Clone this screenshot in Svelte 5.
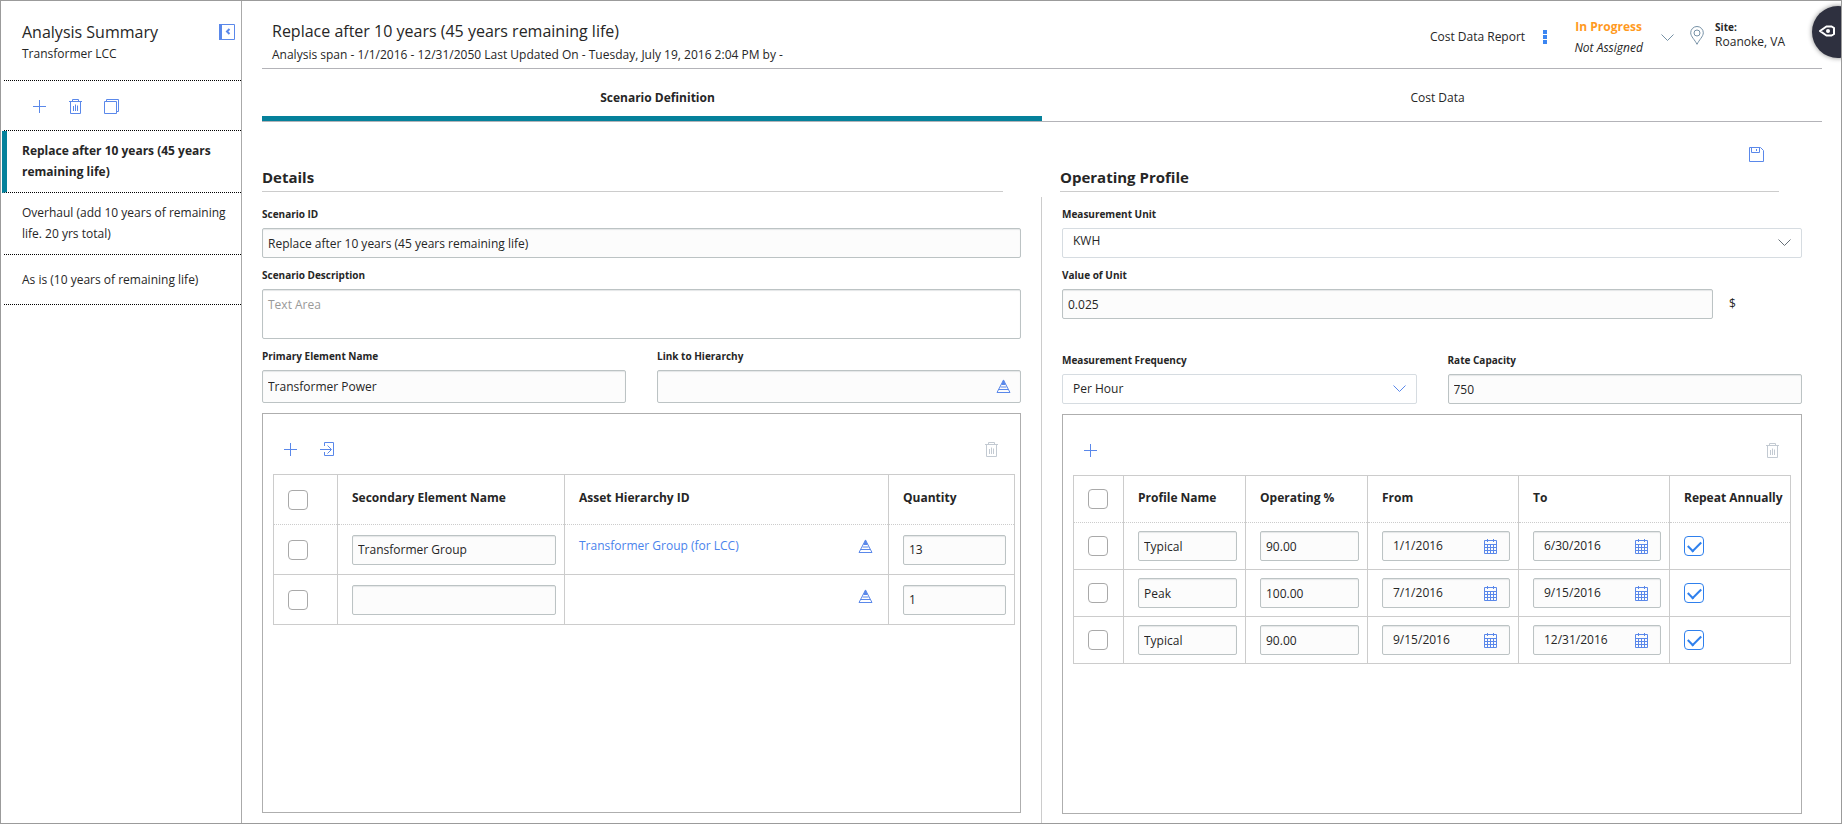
<script>
  const scenarios = [
    'Replace after 10 years (45 years remaining life)',
    'Overhaul (add 10 years of remaining life. 20 yrs total)',
    'As is (10 years of remaining life)'
  ];
  let active = $state(0);
  let tab = $state('definition');

  let elements = $state([
    { picked: false, name: 'Transformer Group', asset: 'Transformer Group (for LCC)', quantity: '13' },
    { picked: false, name: '', asset: '', quantity: '1' }
  ]);

  let profiles = $state([
    { picked: false, name: 'Typical', percent: '90.00', from: '1/1/2016', to: '6/30/2016', repeat: true },
    { picked: false, name: 'Peak', percent: '100.00', from: '7/1/2016', to: '9/15/2016', repeat: true },
    { picked: false, name: 'Typical', percent: '90.00', from: '9/15/2016', to: '12/31/2016', repeat: true }
  ]);
</script>

{#snippet plus()}
  <svg width="15" height="15" viewBox="0 0 15 15"><path d="M7.5 1v13M1 7.5h13" /></svg>
{/snippet}

{#snippet trash()}
  <svg width="15" height="15" viewBox="0 0 15 15">
    <path d="M1 2.5h13M4.500 2.500V.5h6v2M2.500 2.500v12h10v-12M5.500 7v5M7.500 5.500V12M9.500 6.500V12" />
  </svg>
{/snippet}

{#snippet pyramid()}
  <svg width="15" height="15" viewBox="0 0 15 15">
    <path d="M7.500 1L1 13.500h13zM5.500 5.500h4M4.500 8h6M3 10.500h9" />
    <path class="solid" d="M7.500.5L5.500 5h4z" />
  </svg>
{/snippet}

{#snippet calendar()}
  <svg width="13" height="15" viewBox="0 0 13 15">
    <path d="M.5 1.500h12v13H.5zM.5 5.500h12M.5 8.500h12M.5 11.500h12M3.500 5.500v9M6.500 5.500v9M9.500 5.500v9M3.500 0v3M9.500 0v3" />
  </svg>
{/snippet}

{#snippet chevron()}
  <svg width="13" height="8" viewBox="0 0 13 8"><path d="M.5.5l6 6 6-6" /></svg>
{/snippet}

<div class="app">
  <aside>
    <header class="summary">
      <div>
        <h1>Analysis Summary</h1>
        <p>Transformer LCC</p>
      </div>
      <button class="icon" aria-label="Collapse panel">
        <svg width="16" height="16" viewBox="0 0 16 16">
          <path d="M.5.5h15v15H.5z" />
          <path class="bold" d="M10.500 5L8 7.500l2.500 2.500" />
          <path class="solid" d="M0 0h3v16H0z" />
        </svg>
      </button>
    </header>
    <div class="tools">
      <button class="icon" aria-label="Add scenario">{@render plus()}</button>
      <button class="icon" aria-label="Delete scenario">{@render trash()}</button>
      <button class="icon" aria-label="Copy scenario">
        <svg width="15" height="15" viewBox="0 0 15 15">
          <path d="M.5 2.500h12v12H.5zM2.500 2.500v-2h12v12h-2" />
        </svg>
      </button>
    </div>
    <nav>
      {#each scenarios as name, i}
        <button class="scenario" class:active={active === i} onclick={() => (active = i)}>{name}</button>
      {/each}
    </nav>
  </aside>

  <main>
    <header class="top">
      <div class="title">
        <h1>Replace after 10 years (45 years remaining life)</h1>
        <p>Analysis span - 1/1/2016 - 12/31/2050 Last Updated On - Tuesday, July 19, 2016 2:04 PM by -</p>
      </div>
      <div class="status">
        <a href="#report">Cost Data Report</a>
        <button class="icon more" aria-label="More actions">
          <svg width="4" height="14" viewBox="0 0 4 14"><path class="solid" d="M0 0h4v4H0zM0 5h4v4H0zM0 10h4v4H0z" /></svg>
        </button>
        <div class="state">
          <strong>In Progress</strong>
          <em>Not Assigned</em>
        </div>
        <button class="icon slate down" aria-label="Change state">{@render chevron()}</button>
        <div class="slate pin">
          <svg width="14" height="19" viewBox="0 0 14 19">
            <path d="M7 18.300C5 14 .7 10.500.7 6.800a6.300 6.300 0 0 1 12.600 0C13.300 10.500 9 14 7 18.300z" />
            <circle cx="7" cy="7" r="3" />
          </svg>
        </div>
        <div class="site">
          <b>Site:</b>
          <span>Roanoke, VA</span>
        </div>
      </div>
    </header>

    <div class="tabs" role="tablist">
      <button role="tab" aria-selected={tab === 'definition'} onclick={() => (tab = 'definition')}>Scenario Definition</button>
      <button role="tab" aria-selected={tab === 'cost'} onclick={() => (tab = 'cost')}>Cost Data</button>
    </div>

    <div class="save">
      <button class="icon" aria-label="Save">
        <svg width="15" height="15" viewBox="0 0 15 15">
          <path d="M.5.500h11l3 3v11H.5zM2.500.500v5h8v-5M7.500 2v2" />
        </svg>
      </button>
    </div>

    <div class="pair">
      <h2 class="first">Details</h2>
      <h2 class="second">Operating Profile</h2>
    </div>

    <div class="pair">
      <section class="details">
        <div class="field">
          <label for="sid">Scenario ID</label>
          <input class="box" id="sid" value="Replace after 10 years (45 years remaining life)" />
        </div>
        <div class="field">
          <label for="desc">Scenario Description</label>
          <textarea class="box" id="desc" placeholder="Text Area"></textarea>
        </div>
        <div class="split">
          <div class="field">
            <label for="primary">Primary Element Name</label>
            <input class="box tall" id="primary" value="Transformer Power" />
          </div>
          <div class="field">
            <label for="link">Link to Hierarchy</label>
            <div class="box tall combo">
              <input id="link" />
              <button class="icon" aria-label="Browse hierarchy">{@render pyramid()}</button>
            </div>
          </div>
        </div>
        <div class="panel">
          <div class="bar">
            <button class="icon" aria-label="Add element">{@render plus()}</button>
            <button class="icon" aria-label="Import element">
              <svg width="15" height="15" viewBox="0 0 15 15">
                <path d="M4.500 4V.5h9v13h-9V10M0 7.500h11M7.500 3.500l4 4-4 4" />
              </svg>
            </button>
            <button class="icon muted last" aria-label="Delete element">{@render trash()}</button>
          </div>
          <table class="elements">
            <colgroup><col class="a" /><col class="b" /><col class="c" /><col class="d" /></colgroup>
            <thead>
              <tr>
                <th><input type="checkbox" aria-label="Select all elements" /></th>
                <th>Secondary Element Name</th>
                <th>Asset Hierarchy ID</th>
                <th>Quantity</th>
              </tr>
            </thead>
            <tbody>
              {#each elements as row}
                <tr>
                  <td><input type="checkbox" aria-label="Select element" bind:checked={row.picked} /></td>
                  <td><input class="box" aria-label="Secondary element name" bind:value={row.name} /></td>
                  <td>
                    <div class="asset">
                      <a href="#asset">{row.asset}</a>
                      <button class="icon" aria-label="Browse hierarchy">{@render pyramid()}</button>
                    </div>
                  </td>
                  <td><input class="box" aria-label="Quantity" bind:value={row.quantity} /></td>
                </tr>
              {/each}
            </tbody>
          </table>
        </div>
      </section>

      <section class="profile">
        <div class="field">
          <label for="unit">Measurement Unit</label>
          <div class="pick">
            <select id="unit" class="raised"><option>KWH</option></select>
            <span class="slate">{@render chevron()}</span>
          </div>
        </div>
        <div class="field">
          <label for="value">Value of Unit</label>
          <div class="priced">
            <input class="box" id="value" value="0.025" />
            <span>$</span>
          </div>
        </div>
        <div class="split spaced">
          <div class="field">
            <label for="freq">Measurement Frequency</label>
            <div class="pick">
              <select id="freq"><option>Per Hour</option></select>
              <span>{@render chevron()}</span>
            </div>
          </div>
          <div class="field">
            <label for="rate">Rate Capacity</label>
            <input class="box" id="rate" value="750" />
          </div>
        </div>
        <div class="panel">
          <div class="bar">
            <button class="icon" aria-label="Add profile">{@render plus()}</button>
            <button class="icon muted last" aria-label="Delete profile">{@render trash()}</button>
          </div>
          <table class="profiles">
            <colgroup><col class="a" /><col class="b" /><col class="b" /><col class="c" /><col class="c" /><col class="d" /></colgroup>
            <thead>
              <tr>
                <th><input type="checkbox" aria-label="Select all profiles" /></th>
                <th>Profile Name</th>
                <th>Operating %</th>
                <th>From</th>
                <th>To</th>
                <th>Repeat Annually</th>
              </tr>
            </thead>
            <tbody>
              {#each profiles as row}
                <tr>
                  <td><input type="checkbox" aria-label="Select profile" bind:checked={row.picked} /></td>
                  <td><input class="box" aria-label="Profile name" bind:value={row.name} /></td>
                  <td><input class="box" aria-label="Operating percent" bind:value={row.percent} /></td>
                  <td>
                    <div class="box combo date">
                      <input aria-label="From" bind:value={row.from} />
                      <button class="icon" aria-label="Pick start date">{@render calendar()}</button>
                    </div>
                  </td>
                  <td>
                    <div class="box combo date">
                      <input aria-label="To" bind:value={row.to} />
                      <button class="icon" aria-label="Pick end date">{@render calendar()}</button>
                    </div>
                  </td>
                  <td><input type="checkbox" aria-label="Repeat annually" bind:checked={row.repeat} /></td>
                </tr>
              {/each}
            </tbody>
          </table>
        </div>
      </section>
    </div>
  </main>

  <button class="badge" aria-label="Open assistant">
    <svg width="16" height="12" viewBox="0 0 16 12">
      <path d="M1 6l6.500-4.500h5L15 3v6l-2.500 1.500h-5z" /><circle class="solid" cx="9" cy="6" r="2" />
    </svg>
  </button>
</div>

<style>
  :global(body) {
    margin: 0;
    background: #fff;
  }
  .app,
  .app * {
    box-sizing: border-box;
  }
  .app {
    position: relative;
    display: flex;
    overflow: hidden;
    border: 1px solid #9b9b9b;
    background: #fff;
    color: #262626;
    font-family: 'Open Sans', 'Noto Sans', sans-serif;
    font-size: 12px;
    line-height: 16px;
  }
  h1,
  h2,
  p {
    margin: 0;
  }
  h1 {
    font-size: 16px;
    font-weight: 400;
    line-height: 24px;
  }
  button,
  input,
  select,
  textarea {
    margin: 0;
    padding: 0;
    border: 0;
    background: none;
    color: inherit;
    font: inherit;
  }
  button {
    cursor: pointer;
  }
  a {
    color: inherit;
    text-decoration: none;
  }
  svg {
    display: block;
    fill: none;
    stroke: currentColor;
    stroke-width: 1;
  }
  .solid {
    fill: currentColor;
    stroke: none;
  }
  .bold {
    stroke-width: 2;
  }
  .icon {
    flex: none;
    color: #5a88ea;
  }
  .slate {
    color: #7590a5;
  }

  aside {
    flex: none;
    width: 241px;
    border-right: 1px solid #aaa;
  }
  .summary {
    display: flex;
    justify-content: space-between;
    align-items: flex-start;
    height: 80px;
    margin-left: 3px;
    padding: 19px 6px 0 18px;
    border-bottom: 1px dotted #000;
  }
  .summary .icon {
    margin-top: 4px;
  }
  .summary p {
    margin-top: 2px;
  }
  .tools {
    display: flex;
    align-items: center;
    gap: 21px;
    height: 50px;
    margin-left: 3px;
    padding: 1px 0 0 28px;
    border-bottom: 1px dotted #000;
  }
  nav {
    padding-left: 3px;
  }
  .scenario {
    display: block;
    width: 100%;
    padding: 9px 8px 10px 18px;
    border-bottom: 1px dotted #000;
    line-height: 21px;
    text-align: left;
  }
  .scenario:last-child {
    padding: 14px 8px 14px 18px;
  }
  .scenario.active {
    width: calc(100% + 2px);
    margin-left: -2px;
    padding-left: 15px;
    border-left: 5px solid #05819b;
    font-weight: 700;
  }

  main {
    flex: 1;
    min-width: 0;
    padding: 0 19px 0 20px;
  }
  .top {
    display: flex;
    justify-content: space-between;
    height: 68px;
    padding: 18px 37px 0 10px;
    border-bottom: 1px solid #b3b3b8;
  }
  .title p {
    margin-top: 4px;
  }
  .status {
    display: flex;
    align-items: flex-start;
  }
  .status a {
    padding-top: 10px;
  }
  .more {
    margin: 11px 25px 0 18px;
    color: #3b86f2;
  }
  .state {
    display: flex;
    flex-direction: column;
    gap: 5px;
    min-width: 73px;
    text-align: center;
  }
  .state strong {
    color: #ff9a1f;
  }
  .slate.down {
    margin: 15px 16px 0;
    color: #7590a5;
  }
  .pin {
    margin: 7px 11px 0 0;
  }
  .site {
    display: flex;
    flex-direction: column;
  }
  .site b {
    padding-top: 1px;
    font-size: 10px;
    line-height: 14px;
  }

  .tabs {
    display: grid;
    grid-template-columns: 1fr 1fr;
    border-bottom: 1px solid #b3b3b8;
  }
  .tabs button {
    height: 52px;
    padding: 11px 0 0 11px;
    border-bottom: 5px solid transparent;
  }
  .tabs button[aria-selected='true'] {
    border-color: #05819b;
    font-weight: 700;
  }
  .save {
    display: flex;
    justify-content: flex-end;
    padding: 25px 58px 1px 0;
  }
  .pair {
    display: grid;
    grid-template-columns: 1fr 1fr;
  }
  h2 {
    margin: 3px 0 5px;
    padding-bottom: 3px;
    border-bottom: 1px solid #ccc;
    font-size: 15px;
    line-height: 22px;
  }
  h2.first {
    margin-right: 39px;
  }
  h2.second {
    margin-left: 18px;
    margin-right: 43px;
  }
  section {
    display: flex;
    flex-direction: column;
    gap: 10px;
    min-width: 0;
    padding: 10px 20px 9px;
  }
  .details {
    padding-left: 0;
    border-right: 1px solid #ccc;
  }
  .field {
    display: flex;
    flex-direction: column;
    gap: 6px;
    min-width: 0;
  }
  label {
    font-size: 10px;
    font-weight: 700;
    line-height: 15px;
  }
  .box {
    width: 100%;
    height: 30px;
    padding: 0 5px;
    border: 1px solid #bcc3c4;
    border-radius: 2px;
    background: #fcfcfc;
    box-shadow: inset 0 1px 1px #e4e6e7;
  }
  .box.tall {
    height: 33px;
  }
  textarea.box {
    height: 50px;
    padding: 7px 5px;
    background: #fff;
    resize: none;
  }
  textarea::placeholder {
    color: #999;
  }
  .combo {
    display: flex;
    align-items: center;
    padding-right: 9px;
  }
  .combo input {
    flex: 1;
    min-width: 0;
  }
  .date {
    padding: 0 12px 0 10px;
  }
  .split {
    display: grid;
    grid-template-columns: 1fr 1fr;
    gap: 31px;
  }
  .spaced {
    padding-top: 24px;
  }
  .pick {
    display: grid;
    align-items: center;
  }
  .pick select,
  .pick span {
    grid-area: 1 / 1;
  }
  .pick select {
    appearance: none;
    height: 30px;
    padding: 0 10px;
    border: 1px solid #d6dce1;
    border-radius: 2px;
    background: #fff;
  }
  .pick select.raised {
    padding-bottom: 4px;
  }
  .pick span {
    justify-self: end;
    margin-right: 11px;
    pointer-events: none;
    color: #5a88ea;
  }
  .pick span.slate {
    color: #666f77;
  }
  .priced {
    display: flex;
    align-items: center;
    gap: 16px;
    padding-right: 66px;
  }
  .priced .box {
    flex: 1;
  }
  .priced span {
    width: 7px;
  }

  .panel {
    min-height: 400px;
    padding: 0 10px;
    border: 1px solid #aeaeae;
  }
  .details .panel {
    padding-right: 6px;
  }
  .bar {
    display: flex;
    gap: 22px;
    padding: 28px 11px 17px 10px;
  }
  .details .bar {
    padding-right: 15px;
  }
  .last {
    margin-left: auto;
  }
  .muted {
    color: #c3cad2;
  }
  table {
    width: 100%;
    border-collapse: collapse;
    table-layout: fixed;
  }
  th,
  td {
    height: 50px;
    padding: 0 8px 0 14px;
    border: 1px solid #ccc;
    text-align: left;
  }
  th {
    border-bottom-style: dotted;
    white-space: nowrap;
  }
  th + th {
    padding-bottom: 3px;
  }
  tbody tr:first-child td {
    border-top-style: dotted;
  }
  .profiles th,
  .profiles td {
    height: 47px;
  }
  .elements .a { width: 64px; }
  .elements .b { width: 227px; }
  .elements .c { width: 324px; }
  .elements .d { width: 126px; }
  .profiles .a { width: 50px; }
  .profiles .b { width: 122px; }
  .profiles .c { width: 151px; }
  .profiles .d { width: 121px; }
  td .box {
    vertical-align: middle;
  }
  .asset {
    display: flex;
    justify-content: space-between;
    padding: 0 7px 7px 0;
    color: #4a83ec;
  }
  input[type='checkbox'] {
    appearance: none;
    display: grid;
    place-items: center;
    width: 20px;
    height: 20px;
    border: 1px solid #a9a9a9;
    border-radius: 4px;
    background: #fff;
  }
  input[type='checkbox']:checked {
    border-color: #2f80ed;
  }
  input[type='checkbox']:checked::after {
    content: '';
    width: 11px;
    height: 6px;
    margin-bottom: 3px;
    border: solid #2f80ed;
    border-width: 0 0 2px 2px;
    transform: rotate(-45deg);
  }
  .badge {
    position: absolute;
    top: 5px;
    right: -23px;
    display: flex;
    align-items: center;
    width: 52px;
    height: 52px;
    padding: 0 0 2px 7px;
    border-radius: 26px;
    background: #2e303f;
    box-shadow: 0 0 5px #888;
    color: #fff;
  }
  .badge svg {
    stroke-width: 2;
  }
</style>
